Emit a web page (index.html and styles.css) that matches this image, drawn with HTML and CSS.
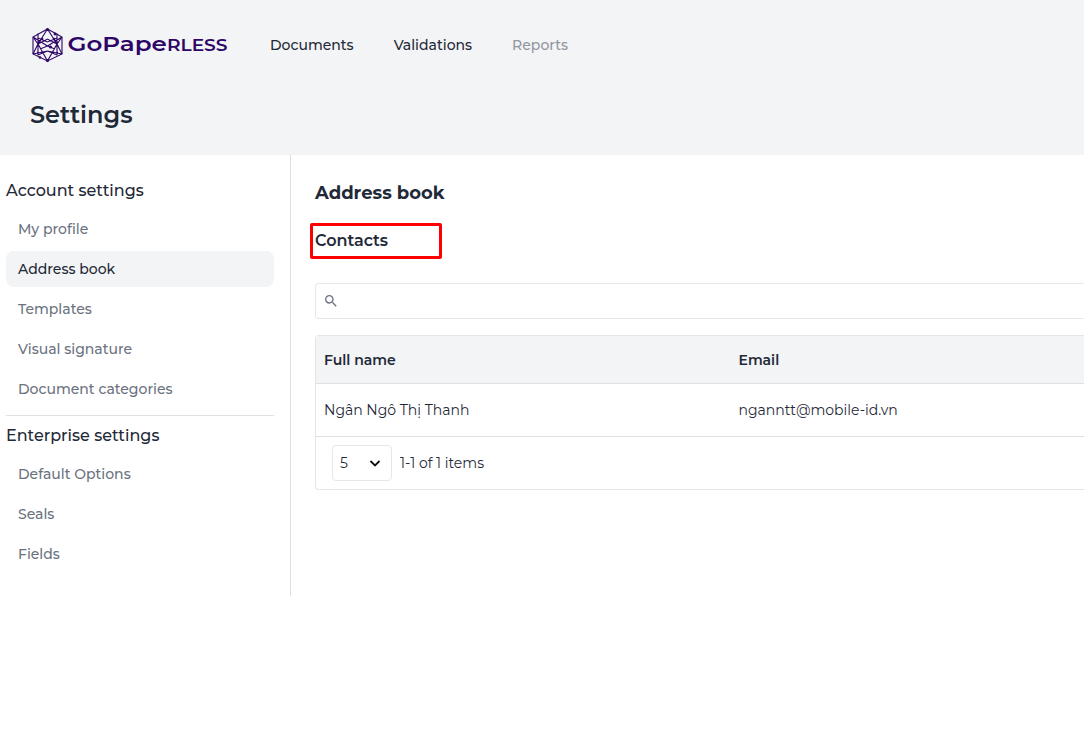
FILE: index.html
```html
<!DOCTYPE html>
<html lang="en">
<head>
    <meta charset="utf-8">
    <title>GoPaperless - Settings</title>
    <meta name="viewport" content="width=device-width, initial-scale=1">
    <link rel="stylesheet" href="styles.css">
</head>
<body>
    <header class="top">
        <div class="bar">
            <a class="logo" href="#">
                <svg width="198" height="36" viewBox="0 0 198 36">
                    <g class="mark">
                        <path d="M17.500 2 32 10v17L17.500 34 3 27V10z"/>
                        <path d="M17.500 2 8 17 3 10M17.500 2 27 17l5-7M8 6.500v22M27 6.500v22M3 27l5-10 9.500 17L27 17l5 10M8 11l9.500 4 9.500-4M8 17l9.500-5 9.500 5M10 22l7.500-3 7.500 3M8 28l9.500-4 9.500 4M3 10l14.500 9L32 10M3 27l14.500-3L32 27"/>
                        <circle cx="17.500" cy="2.500" r="1.500"/>
                        <circle cx="25" cy="7" r="1.400"/>
                        <circle cx="12" cy="12" r="1.300"/>
                        <circle cx="24" cy="12" r="1.300"/>
                        <circle cx="20.500" cy="20" r="1.500"/>
                        <circle cx="10" cy="30.500" r="1.300"/>
                        <circle cx="17.500" cy="33.500" r="1.500"/>
                    </g>
                    <text class="word" x="37.500" y="23.900" textLength="160" lengthAdjust="spacingAndGlyphs">GoPape<tspan class="small">rless</tspan></text>
                </svg>
            </a>
            <nav class="nav">
                <a href="#">Documents</a>
                <a href="#">Validations</a>
                <a class="reports" href="#">Reports</a>
            </nav>
        </div>
        <h1>Settings</h1>
    </header>

    <div class="content">
        <aside class="sidebar">
            <h2>Account settings</h2>
            <ul class="menu">
                <li><a href="#">My profile</a></li>
                <li><a class="active" href="#">Address book</a></li>
                <li><a href="#">Templates</a></li>
                <li><a href="#">Visual signature</a></li>
                <li><a href="#">Document categories</a></li>
            </ul>
            <hr>
            <h2>Enterprise settings</h2>
            <ul class="menu">
                <li><a href="#">Default Options</a></li>
                <li><a href="#">Seals</a></li>
                <li><a href="#">Fields</a></li>
            </ul>
        </aside>

        <main class="main">
            <h2>Address book</h2>
            <h3>Contacts</h3>

            <div class="search">
                <svg width="16" height="16" viewBox="0 0 24 24" fill="currentColor"><path d="M15.500 14h-.790l-.280-.270A6.470 6.470 0 0 0 16 9.500 6.500 6.500 0 1 0 9.500 16c1.610 0 3.090-.590 4.230-1.570l.270.280v.790l5 4.990L20.490 19zm-6 0C7.010 14 5 11.990 5 9.500S7.010 5 9.500 5 14 7.010 14 9.500 11.990 14 9.500 14"/></svg>
            </div>

            <div class="table">
                <div class="row head">
                    <span>Full name</span>
                    <span>Email</span>
                </div>
                <div class="row">
                    <span>Ngân Ngô Thị Thanh</span>
                    <span>nganntt@mobile-id.vn</span>
                </div>
                <div class="foot">
                    <div class="select">
                        <span>5</span>
                        <svg width="16" height="16" viewBox="0 0 16 16"><path d="m3.500 6 4.500 4.500L12.500 6"/></svg>
                    </div>
                    <span>1-1 of 1 items</span>
                </div>
            </div>
        </main>
    </div>
</body>
</html>
```
FILE: styles.css
```css
:root {
    --dark: #1f2937;
    --gray: #6b7280;
    --light: #f3f4f6;
    --line: #e0e0e0;
    --brand: #2d0666;
}

* {
    box-sizing: border-box;
}

body {
    margin: 0;
    background: #fff;
    color: var(--dark);
    font-family: Montserrat, Inter, sans-serif;
    font-size: 14px;
}

h1, h2, h3, ul {
    margin: 0;
    padding: 0;
    font-weight: 500;
}

a {
    color: inherit;
    text-decoration: none;
}

/* Header */
.top {
    height: 155px;
    padding: 26px 30px 0;
    background: var(--light);
}

.bar {
    display: flex;
    align-items: center;
    height: 38px;
}

.logo, .logo svg {
    display: block;
}

.mark {
    fill: none;
    stroke: var(--brand);
    stroke-width: 1.1;
}

.mark circle {
    fill: var(--brand);
    stroke: none;
}

.word {
    fill: var(--brand);
    font-size: 20.5px;
    font-weight: 600;
}

.small {
    font-size: 15.5px;
    text-transform: uppercase;
}

.nav {
    display: flex;
    gap: 40px;
    margin-left: 42px;
    font-weight: 500;
}

.reports {
    color: #9197a0;
}

h1 {
    margin-top: 35px;
    font-size: 24px;
    font-weight: 600;
    line-height: 32px;
}

/* Sidebar */
.content {
    display: flex;
    align-items: flex-start;
}

.sidebar {
    flex: none;
    width: 291px;
    height: 441px;
    padding: 24px 16px 0 6px;
    border-right: 1px solid var(--line);
}

.sidebar h2 {
    margin-bottom: 8px;
    font-size: 16px;
    line-height: 24px;
}

.menu {
    display: flex;
    flex-direction: column;
    gap: 4px;
    list-style: none;
}

.menu a {
    display: block;
    padding: 0 12px;
    border-radius: 8px;
    color: var(--gray);
    font-weight: 500;
    line-height: 36px;
}

.menu .active {
    background: var(--light);
    color: var(--dark);
}

.sidebar hr {
    margin: 8px 0;
    border: none;
    border-top: 1px solid var(--line);
}

/* Address book */
.main {
    flex: 1;
    padding: 26px 0 0 24px;
}

.main h2 {
    font-size: 18px;
    font-weight: 700;
    line-height: 24px;
}

.main h3 {
    width: 132px;
    height: 36px;
    margin: 18px 0 24px -5px;
    padding-left: 2px;
    border: 3px solid #f00;
    border-radius: 2px;
    font-size: 16px;
    font-weight: 600;
    line-height: 29px;
}

.search {
    display: flex;
    align-items: center;
    height: 36px;
    padding-left: 7px;
    border: 1px solid #e5e7eb;
    border-right: none;
    border-radius: 4px 0 0 4px;
    color: var(--gray);
}

.table {
    margin-top: 16px;
    border: 1px solid #e5e5e5;
    border-right: none;
    border-radius: 4px 0 0 4px;
}

.row {
    display: grid;
    grid-template-columns: 414.500px 1fr;
    align-items: center;
    height: 53px;
    padding-left: 8px;
    border-bottom: 1px solid var(--line);
}

.head {
    height: 48px;
    background: var(--light);
    font-weight: 600;
}

.foot {
    display: flex;
    align-items: center;
    gap: 8px;
    height: 52px;
    padding-left: 16px;
}

.select {
    display: flex;
    align-items: center;
    justify-content: space-between;
    width: 60px;
    height: 36px;
    padding: 0 8px 0 7px;
    border: 1px solid #e5e7eb;
    border-radius: 4px;
}

.select path {
    fill: none;
    stroke: #111;
    stroke-width: 1.8;
}
```
